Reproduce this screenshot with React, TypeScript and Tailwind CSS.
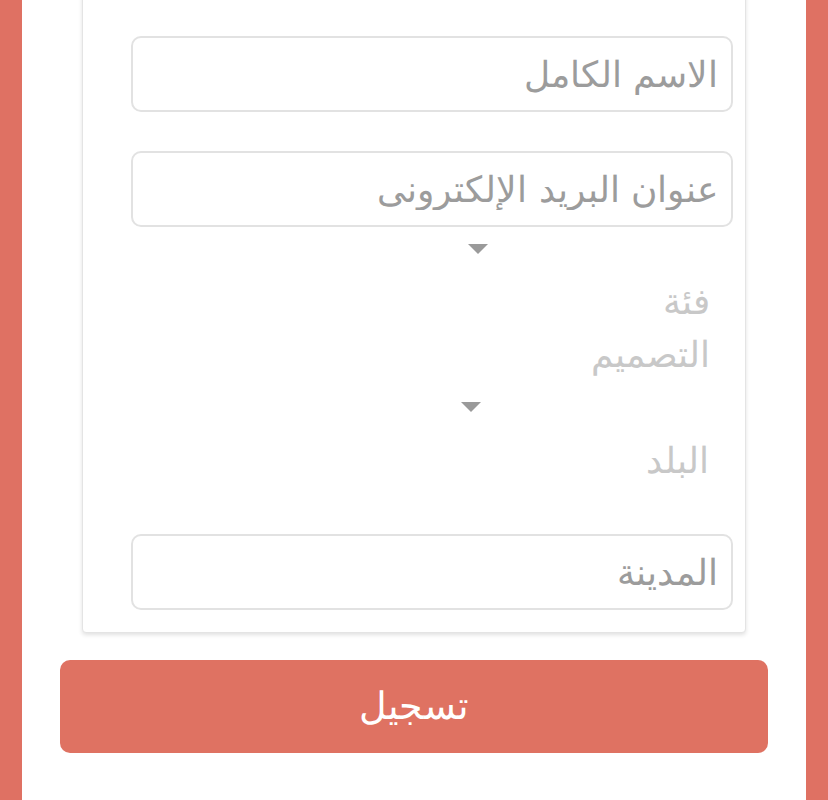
const font = { fontFamily: '"DejaVu Sans", sans-serif' };

function Field({ placeholder }: { placeholder: string }) {
  return (
    <input
      dir="rtl"
      placeholder={placeholder}
      className="block h-[76px] w-full rounded-[10px] border-2 border-[#e2e2e2] bg-white px-[13px] text-[36px] font-extralight text-[#777] outline-none placeholder:text-[#9c9c9c]"
      style={font}
    />
  );
}

function Caret({ offset }: { offset: string }) {
  return (
    <div className={offset}>
      <svg width="20" height="10" viewBox="0 0 20 10">
        <path d="M0 0 L20 0 L10 10 Z" fill="#9a9a9a" />
      </svg>
    </div>
  );
}

export default function App() {
  return (
    <div className="min-h-[800px] overflow-hidden bg-[#df7163] px-[22px]" style={font}>
      <div className="flex min-h-[800px] flex-col bg-white px-[38px] pb-10">
        <div className="mx-[22px] -mt-5 rounded-b-[4px] border border-[#e4e4e4] bg-white pb-[22px] pl-[48px] pr-[12px] pt-[55px] shadow-[0_2px_4px_rgba(0,0,0,0.12)]">
          <Field placeholder="الاسم الكامل" />
          <div className="mt-[39px]">
            <Field placeholder="عنوان البريد الإلكترونى" />
          </div>

          <Caret offset="mt-[17px] ml-[337px] h-[10px]" />
          <div dir="rtl" className="mt-[21px] ml-auto mr-[23px] w-[140px] text-right text-[36px] font-extralight leading-[53px] text-[#c8c8c8]">
            فئة التصميم
          </div>

          <Caret offset="mt-[21px] ml-[330px] h-[10px]" />
          <div dir="rtl" className="mt-[22px] mr-[24px] text-right text-[36px] font-extralight leading-[53px] text-[#c8c8c8]">
            البلد
          </div>

          <div className="mt-[47px]">
            <Field placeholder="المدينة" />
          </div>
        </div>

        <button
          className="mt-[27px] flex h-[93px] w-full items-center justify-center rounded-[10px] bg-[#df7262] text-[38px] font-extralight text-white"
          style={font}
        >
          تسجيل
        </button>
      </div>
    </div>
  );
}
